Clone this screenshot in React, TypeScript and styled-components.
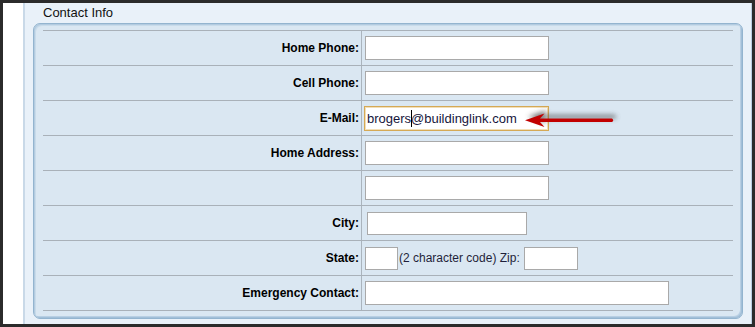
import React from 'react';
import styled, { createGlobalStyle } from 'styled-components';

const GlobalStyle = createGlobalStyle`
  html, body {
    margin: 0;
    padding: 0;
    background: #2b2b2b;
  }
  body {
    font-family: "Liberation Sans", Arial, sans-serif;
  }
`;

const Frame = styled.div`
  position: relative;
  box-sizing: border-box;
  width: 755px;
  height: 327px;
  padding: 3px 3px 3px 3px;
  background: #2b2b2b;
  display: flex;
`;

const Gutter = styled.div`
  width: 20px;
  background: #ffffff;
`;

const Panel = styled.section`
  flex: 1;
  display: flex;
  flex-direction: column;
  background: #e9f1f9;
  border-left: 2px solid #c9d9e8;
  border-right: 1px solid #b9cce0;
`;

const Header = styled.h2`
  margin: 0;
  height: 20px;
  padding-left: 18px;
  font-size: 13px;
  font-weight: normal;
  line-height: 20px;
  color: #111;
`;

const Box = styled.div`
  box-sizing: border-box;
  width: 710px;
  height: 296px;
  margin-left: 8px;
  padding: 6px 9px 0 9px;
  background: #dae7f2;
  border: 1px solid #93b4cf;
  border-radius: 7px;
  box-shadow: inset 1px 1px 0 #b3cbe0, inset 2px 2px 0 #c8dbea,
    inset -1px -1px 0 #a2bfd8, inset -2px -2px 0 #b8cfe3;
`;

const Table = styled.div`
  border-bottom: 1px solid #a9b1b9;
`;

const Row = styled.div`
  display: grid;
  grid-template-columns: 319px 1fr;
  box-sizing: border-box;
  height: 35px;
  border-top: 1px solid #a9b1b9;
`;

const LabelCell = styled.label`
  display: flex;
  align-items: center;
  justify-content: flex-end;
  padding-right: 2px;
  border-right: 1px solid #aab4bd;
  font-size: 12px;
  font-weight: bold;
  color: #000;
`;

const FieldCell = styled.div`
  display: flex;
  align-items: center;
  padding-left: 3px;
`;

const TextField = styled.input<{ $w: number; $h?: number; $shift?: number; $focus?: boolean }>`
  box-sizing: border-box;
  width: ${(p) => p.$w}px;
  height: ${(p) => p.$h ?? 24}px;
  margin: 0 0 0 ${(p) => p.$shift ?? 0}px;
  padding: 0 2px;
  background: #fff;
  border: 1px solid ${(p) => (p.$focus ? '#d5a956' : '#a9a9a9')};
  box-shadow: ${(p) => (p.$focus ? 'inset 0 0 0 1px #f2dfb8' : 'none')};
  border-radius: 0;
  font-family: "Liberation Sans", Arial, sans-serif;
  font-size: 13px;
  color: #16163c;
  outline: none;
`;

const FieldWrap = styled.span`
  position: relative;
  display: inline-flex;
`;

const Caret = styled.span`
  position: absolute;
  left: 46px;
  top: 4px;
  width: 1px;
  height: 17px;
  background: #000;
`;

const Hint = styled.span`
  margin: 0 4px 0 1px;
  font-size: 12px;
  color: #1f1f3a;
`;

const ArrowMark = styled.svg`
  position: absolute;
  left: 518px;
  top: 106px;
  width: 100px;
  height: 28px;
  overflow: visible;
`;

const arrowPath =
  'M7 14.2 L26.5 7.4 L22 12.4 L94 12.4 Q96.5 14.2 94 16 L22 16 L26.5 21 Z';

const Arrow = () => (
  <ArrowMark viewBox="0 0 100 28">
    <defs>
      <filter id="blur" x="-20%" y="-100%" width="140%" height="300%">
        <feGaussianBlur stdDeviation="2.4" />
      </filter>
    </defs>
    <path
      d={arrowPath}
      transform="translate(3 -3.5)"
      fill="#4a4a4a"
      opacity="0.75"
      filter="url(#blur)"
    />
    <path d={arrowPath} fill="#c20000" />
  </ArrowMark>
);

const App = () => {
  return (
    <>
      <GlobalStyle />
      <Frame>
        <Gutter />
        <Panel>
          <Header>Contact Info</Header>
          <Box>
            <Table>
              <Row>
                <LabelCell>Home Phone:</LabelCell>
                <FieldCell>
                  <TextField $w={184} />
                </FieldCell>
              </Row>
              <Row>
                <LabelCell>Cell Phone:</LabelCell>
                <FieldCell>
                  <TextField $w={184} />
                </FieldCell>
              </Row>
              <Row>
                <LabelCell>E-Mail:</LabelCell>
                <FieldCell>
                  <FieldWrap>
                    <TextField
                      $w={185}
                      $h={25}
                      $shift={-1}
                      $focus
                      defaultValue="brogers@buildinglink.com"
                    />
                    <Caret />
                  </FieldWrap>
                </FieldCell>
              </Row>
              <Row>
                <LabelCell>Home Address:</LabelCell>
                <FieldCell>
                  <TextField $w={184} />
                </FieldCell>
              </Row>
              <Row>
                <LabelCell />
                <FieldCell>
                  <TextField $w={184} />
                </FieldCell>
              </Row>
              <Row>
                <LabelCell>City:</LabelCell>
                <FieldCell>
                  <TextField $w={160} $h={23} $shift={2} />
                </FieldCell>
              </Row>
              <Row>
                <LabelCell>State:</LabelCell>
                <FieldCell>
                  <TextField $w={33} $h={23} />
                  <Hint>(2 character code) Zip:</Hint>
                  <TextField $w={54} $h={23} />
                </FieldCell>
              </Row>
              <Row>
                <LabelCell>Emergency Contact:</LabelCell>
                <FieldCell>
                  <TextField $w={304} />
                </FieldCell>
              </Row>
            </Table>
          </Box>
        </Panel>
        <Arrow />
      </Frame>
    </>
  );
};

export default App;
